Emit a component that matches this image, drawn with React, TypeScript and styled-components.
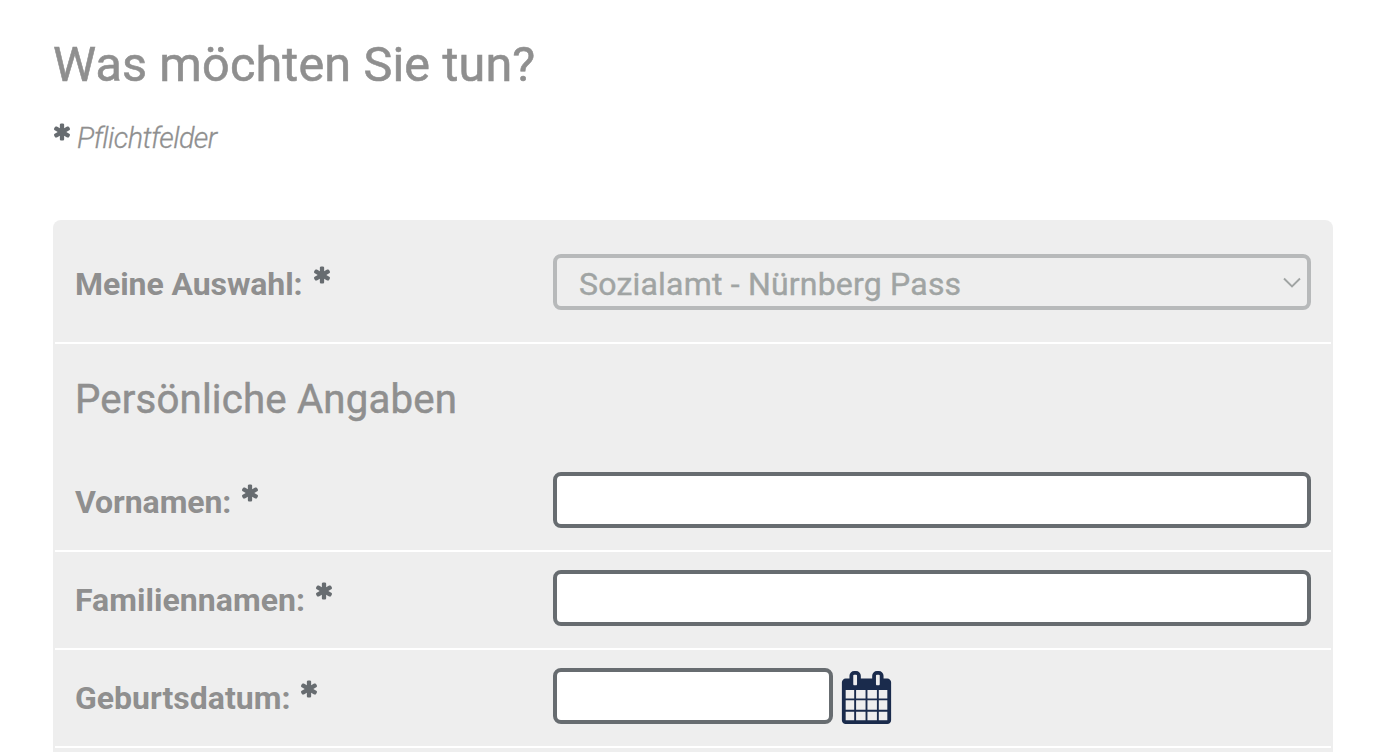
import React from 'react';
import styled, { createGlobalStyle } from 'styled-components';

const GlobalStyle = createGlobalStyle`
  * { box-sizing: border-box; }
  body { margin: 0; background: #fff; font-family: Roboto, "Liberation Sans", sans-serif; color: #8f8f8f; overflow: hidden; }
`;

const Page = styled.main`
  height: 752px;
  overflow: hidden;
  padding: 37px 57px 0 53px;
`;

const Title = styled.h1`
  margin: 0;
  font-size: 48.5px;
  line-height: 56px;
  font-weight: 400;
  letter-spacing: 0.17px;
  -webkit-text-stroke: 0.6px currentColor;
  white-space: nowrap;
`;

const Hint = styled.p`
  display: flex;
  align-items: flex-start;
  margin: 27px 0 64px;
  height: 36px;
  font-size: 28.8px;
  line-height: 36px;
  font-style: italic;
  font-weight: 300;
`;

const HintText = styled.span`
  margin-left: 7px;
  letter-spacing: -0.55px;
  -webkit-text-stroke: 0.3px currentColor;
`;

const Panel = styled.form`
  height: 600px;
  padding: 0 2px;
  background: #eee;
  border-radius: 8px;
`;

const Row = styled.div<{ $height: number; $top: number }>`
  display: grid;
  grid-template-columns: 478px 1fr;
  align-items: start;
  height: ${(p) => p.$height}px;
  padding: ${(p) => p.$top}px 20px 0;
  border-bottom: 2px solid #fff;
`;

const Label = styled.label<{ $spacing?: number }>`
  display: flex;
  align-items: flex-start;
  height: 56px;
  font-size: 32px;
  line-height: 60px;
  font-weight: 700;
  letter-spacing: ${(p) => p.$spacing ?? -0.08}px;
  white-space: nowrap;
`;

const Heading = styled.h2`
  margin: 0;
  height: 110px;
  padding: 32px 20px 0;
  font-size: 40.2px;
  line-height: 48px;
  font-weight: 400;
  letter-spacing: 0.17px;
  -webkit-text-stroke: 0.5px currentColor;
`;

const Field = styled.div`
  display: flex;
  align-items: flex-start;
`;

const Input = styled.input<{ $width?: number }>`
  width: ${(p) => (p.$width ? `${p.$width}px` : '100%')};
  height: 56px;
  padding: 0 22px;
  border: 4px solid #676c70;
  border-radius: 8px;
  background: #fff;
  font: 400 32px Roboto, sans-serif;
  outline: 0;
`;

const SelectBox = styled.div`
  display: flex;
  align-items: center;
  justify-content: space-between;
  width: 100%;
  height: 56px;
  padding: 3px 6px 0 22px;
  border: 4px solid #b7b9ba;
  border-radius: 8px;
  color: #a0a4a3;
  font-size: 32px;
  font-weight: 400;
  line-height: 48px;
  letter-spacing: 0.2px;
  -webkit-text-stroke: 0.4px currentColor;
`;

const StarIcon = styled.svg<{ $left: number; $top: number }>`
  flex: none;
  width: 20px;
  height: 20px;
  margin: ${(p) => p.$top}px -2px 0 ${(p) => p.$left}px;
  fill: #676c70;
`;

const CalendarIcon = styled.svg`
  flex: none;
  width: 53px;
  height: 53px;
  margin: 3px 0 0 7.4px;
  fill: #1a2b4c;
`;

const Chevron = styled.svg`
  width: 18px;
  height: 12px;
  margin-bottom: 2px;
  fill: none;
  stroke: #a0a4a3;
  stroke-width: 1.9;
`;

const Star = ({ left = 9, top = 11 }: { left?: number; top?: number }) => (
  <StarIcon $left={left} $top={top} viewBox="0 0 1792 1792" aria-hidden="true">
    <path d="M1546 1050q46 26 59.5 77.5t-12.5 97.5l-64 110q-26 46-77.5 59.5t-97.5-12.5l-266-153v307q0 52-38 90t-90 38h-128q-52 0-90-38t-38-90v-307l-266 153q-46 26-97.5 12.5t-77.5-59.5l-64-110q-26-46-12.5-97.5t59.5-77.5l266-154-266-154q-46-26-59.5-77.5t12.5-97.5l64-110q26-46 77.5-59.5t97.5 12.5l266 153v-307q0-52 38-90t90-38h128q52 0 90 38t38 90v307l266-153q46-26 97.5-12.5t77.5 59.5l64 110q26 46 12.5 97.5t-59.5 77.5l-266 154z" />
  </StarIcon>
);

const Calendar = () => (
  <CalendarIcon viewBox="0 0 1792 1792" aria-hidden="true">
    <path d="M192 1664h288v-288h-288v288zm352 0h320v-288h-320v288zm-352-352h288v-320h-288v320zm352 0h320v-320h-320v320zm-352-384h288v-288h-288v288zm736 736h320v-288h-320v288zm-384-736h320v-288h-320v288zm768 736h288v-288h-288v288zm-384-352h320v-320h-320v320zm-352-864v-288q0-13-9.5-22.5t-22.5-9.5h-64q-13 0-22.5 9.5t-9.5 22.5v288q0 13 9.5 22.5t22.5 9.5h64q13 0 22.5-9.5t9.5-22.5zm736 864h288v-320h-288v320zm-384-384h320v-288h-320v288zm384 0h288v-288h-288v288zm32-480v-288q0-13-9.5-22.5t-22.5-9.5h-64q-13 0-22.5 9.5t-9.5 22.5v288q0 13 9.5 22.5t22.5 9.5h64q13 0 22.5-9.5t9.5-22.5zm384-64v1280q0 52-38 90t-90 38h-1408q-52 0-90-38t-38-90v-1280q0-52 38-90t90-38h128v-96q0-66 47-113t113-47h64q66 0 113 47t47 113v96h384v-96q0-66 47-113t113-47h64q66 0 113 47t47 113v96h128q52 0 90 38t38 90z" />
  </CalendarIcon>
);

export default function App() {
  return (
    <Page>
      <GlobalStyle />
      <Title>Was möchten Sie tun?</Title>
      <Hint>
        <Star left={-1} top={2} />
        <HintText>Pflichtfelder</HintText>
      </Hint>
      <Panel>
        <Row $height={124} $top={34}>
          <Label>Meine Auswahl:<Star /></Label>
          <SelectBox>
            <span>Sozialamt - Nürnberg Pass</span>
            <Chevron viewBox="0 0 18 12"><path d="M1 1.5 9 9.5 17 1.5" /></Chevron>
          </SelectBox>
        </Row>
        <Heading>Persönliche Angaben</Heading>
        <Row $height={98} $top={18}>
          <Label htmlFor="first">Vornamen:<Star /></Label>
          <Input id="first" />
        </Row>
        <Row $height={98} $top={18}>
          <Label htmlFor="last" $spacing={0.04}>Familiennamen:<Star /></Label>
          <Input id="last" />
        </Row>
        <Row $height={98} $top={18}>
          <Label htmlFor="birth" $spacing={0}>Geburtsdatum:<Star /></Label>
          <Field>
            <Input id="birth" $width={280} />
            <Calendar />
          </Field>
        </Row>
      </Panel>
    </Page>
  );
}
